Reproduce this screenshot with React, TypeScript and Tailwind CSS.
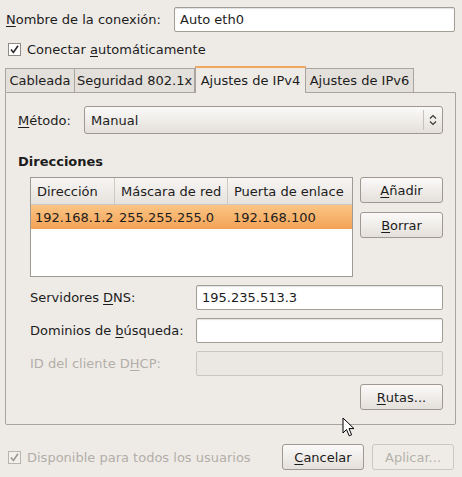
import React from "react";

const FONT = { fontFamily: '"DejaVu Sans", "Liberation Sans", sans-serif' };

function U({ children }: { children: React.ReactNode }) {
  return <span className="underline underline-offset-2 decoration-1">{children}</span>;
}

function Entry({ value = "", disabled = false, className = "" }: { value?: string; disabled?: boolean; className?: string }) {
  return (
    <div
      className={`h-[25px] rounded-[2px] border flex items-center px-[5px] ${
        disabled
          ? "border-[#c9c5bf] bg-[#ebe8e4]"
          : "border-[#a29d95] bg-white shadow-[inset_0_1px_1px_rgba(0,0,0,0.12)]"
      } ${className}`}
    >
      {value}
    </div>
  );
}

function Button({ children, disabled = false, className = "" }: { children: React.ReactNode; disabled?: boolean; className?: string }) {
  return (
    <div
      className={`h-[26px] rounded-[3px] border flex items-center justify-center ${
        disabled
          ? "border-[#cbc7c1] bg-[#efece8] text-[#b6b1aa]"
          : "border-[#9e9890] bg-gradient-to-b from-[#fbfaf9] to-[#e4e0db] text-[#1c1c1c]"
      } ${className}`}
    >
      {children}
    </div>
  );
}

function Check({ disabled = false }: { disabled?: boolean }) {
  return (
    <div
      className={`w-[13px] h-[13px] border flex items-center justify-center ${
        disabled ? "border-[#b9b4ad] bg-[#f2f0ed]" : "border-[#8f8a83] bg-white"
      }`}
    >
      <svg width="11" height="11" viewBox="0 0 11 11">
        <path
          d="M2 5.5 L4.4 8.4 L9 1.8"
          fill="none"
          stroke={disabled ? "#9c978f" : "#2a2a2a"}
          strokeWidth="1.6"
        />
      </svg>
    </div>
  );
}

function Tab({ label, active = false, className = "" }: { label: string; active?: boolean; className?: string }) {
  if (active) {
    return (
      <div
        className={`h-[27px] -mb-px relative z-10 border-x border-[#a9a59e] bg-[#eeebe7] flex items-center justify-center whitespace-nowrap ${className}`}
      >
        <div className="absolute left-[-1px] right-[-1px] top-0 h-[2px] rounded-t-[2px] bg-[#f2a55e]" />
        <span className="pt-[2px]">{label}</span>
      </div>
    );
  }
  return (
    <div
      className={`h-[24px] border border-b-0 border-[#a9a59e] bg-[#e3dfda] flex items-center justify-center whitespace-nowrap ${className}`}
    >
      {label}
    </div>
  );
}

export default function App() {
  return (
    <div
      className="relative w-[462px] h-[477px] overflow-hidden bg-[#eeebe7] text-[13px] text-[#1c1c1c] leading-none"
      style={FONT}
    >
      {/* connection name */}
      <div className="flex items-center pt-[7px] pl-[6px]">
        <div className="w-[168px]">
          <U>N</U>ombre de la conexión:
        </div>
        <Entry value="Auto eth0" className="w-[281px] h-[24px]" />
      </div>

      {/* auto connect */}
      <div className="flex items-center mt-[9px] pl-[8px] h-[16px] gap-[6px]">
        <Check />
        <span>
          Conectar <U>a</U>utomáticamente
        </span>
      </div>

      {/* tabs */}
      <div className="flex items-end mt-[9px] h-[26px] pl-[5px]">
        <Tab label="Cableada" className="w-[70px]" />
        <Tab label="Seguridad 802.1x" className="w-[120px] border-l-0" />
        <Tab label="Ajustes de IPv4" active className="w-[111px]" />
        <Tab label="Ajustes de IPv6" className="w-[108px] border-l-0" />
      </div>

      {/* IPv4 page */}
      <div className="ml-[5px] w-[451px] h-[333px] border border-[#a9a59e] rounded-b-[2px] px-[12px] pt-[13px]">
        <div className="flex items-center h-[28px]">
          <div className="w-[66px]">
            <U>M</U>étodo:
          </div>
          <div className="flex-1 h-[28px] rounded-[3px] border border-[#9e9890] bg-gradient-to-b from-[#fbfaf9] to-[#e4e0db] flex items-center">
            <span className="flex-1 pl-[6px]">Manual</span>
            <div className="w-px h-[20px] bg-[#c7c2bb]" />
            <div className="w-[18px] flex justify-center">
              <svg width="8" height="12" viewBox="0 0 8 12">
                <path d="M1 4.5 L4 1.5 L7 4.5 M1 7.5 L4 10.5 L7 7.5" fill="none" stroke="#3a3a3a" strokeWidth="1.2" />
              </svg>
            </div>
          </div>
        </div>

        <div className="mt-[21px] font-bold">Direcciones</div>

        <div className="flex mt-[9px] pl-[12px] gap-[7px]">
          <div className="w-[323px] h-[100px] border border-[#9e9a93] bg-white flex flex-col">
            <div className="flex h-[27px] bg-gradient-to-b from-[#f7f5f3] to-[#e6e2dd] border-b border-[#cdc8c2]">
              <div className="w-[84px] pl-[6px] flex items-center border-r border-[#cdc8c2]">Dirección</div>
              <div className="w-[113px] pl-[6px] flex items-center border-r border-[#cdc8c2]">Máscara de red</div>
              <div className="flex-1 pl-[6px] flex items-center">Puerta de enlace</div>
            </div>
            <div className="flex h-[24px] bg-gradient-to-b from-[#fbc584] to-[#f3a256] items-center">
              <div className="w-[84px] pl-[4px]">192.168.1.2</div>
              <div className="w-[113px] pl-[4px]">255.255.255.0</div>
              <div className="flex-1 pl-[5px]">192.168.100</div>
            </div>
          </div>
          <div className="flex flex-col gap-[9px]">
            <Button className="w-[83px]">
              <U>A</U>ñadir
            </Button>
            <Button className="w-[83px]">
              <U>B</U>orrar
            </Button>
          </div>
        </div>

        <div className="pl-[12px] mt-[8px] flex flex-col gap-[8px]">
          <div className="flex items-center">
            <div className="w-[166px]">
              Servidores <U>D</U>NS:
            </div>
            <Entry value="195.235.513.3" className="flex-1" />
          </div>
          <div className="flex items-center">
            <div className="w-[166px]">
              Dominios de <U>b</U>úsqueda:
            </div>
            <Entry className="flex-1" />
          </div>
          <div className="flex items-center">
            <div className="w-[166px] text-[#b3aea7]">
              ID del cliente D<U>H</U>CP:
            </div>
            <Entry disabled className="flex-1" />
          </div>
        </div>

        <div className="flex justify-end mt-[8px]">
          <Button className="w-[83px]">
            <U>R</U>utas...
          </Button>
        </div>
      </div>

      {/* dialog actions */}
      <div className="flex items-center mt-[19px] pl-[8px] pr-[8px]">
        <div className="flex items-center gap-[6px] flex-1 text-[#b3aea7]">
          <Check disabled />
          <span>Disponible para todos los usuarios</span>
        </div>
        <Button className="w-[82px]">
          <U>C</U>ancelar
        </Button>
        <Button disabled className="w-[82px] ml-[8px]">
          Aplicar...
        </Button>
      </div>

      {/* mouse pointer */}
      <svg className="absolute left-[342px] top-[417px]" width="14" height="21" viewBox="0 0 14 21">
        <path
          d="M1 1 L1 16 L4.5 12.5 L7.2 18.8 L9.6 17.8 L7 11.6 L12 11.6 Z"
          fill="#fff"
          stroke="#000"
          strokeWidth="1"
          strokeLinejoin="round"
        />
      </svg>
    </div>
  );
}
